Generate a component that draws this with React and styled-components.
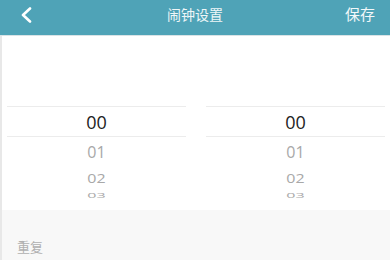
import React from "react";
import styled, { createGlobalStyle } from "styled-components";

const Global = createGlobalStyle`
  html, body { margin: 0; padding: 0; background: #fff; }
  body { font-family: "Noto Sans CJK SC", "Noto Sans", sans-serif; }
`;

const Page = styled.div`
  width: 390px;
  height: 260px;
  overflow: hidden;
  display: flex;
  flex-direction: column;
`;

const Header = styled.div`
  height: 35px;
  flex: none;
  background: #4fa3b7;
  display: grid;
  grid-template-columns: 60px 1fr 60px;
  align-items: center;
  color: #fff;
  border-bottom: 1px solid #d9e3e6;
`;

const Back = styled.div`
  padding-left: 20px;
  display: flex;
  align-items: center;
  margin-top: -6px;
`;

const Title = styled.div`
  text-align: center;
  font-size: 14px;
  color: #eef6f8;
  margin-top: -8px;
`;

const Save = styled.div`
  text-align: right;
  padding-right: 15px;
  font-size: 15px;
  color: #f2f8fa;
  margin-top: -8px;
`;

const Body = styled.div`
  flex: 1;
  display: flex;
  flex-direction: column;
  border-left: 2px solid #e8e8e8;
`;

const Pickers = styled.div`
  height: 174px;
  flex: none;
  display: flex;
  gap: 20px;
  padding: 0 5px 0 5px;
  background: #fff;
`;

const Column = styled.div`
  flex: 1;
  display: flex;
  flex-direction: column;
  padding-top: 70px;
  height: 162px;
  overflow: hidden;
  box-sizing: border-box;
`;

const Selected = styled.div`
  height: 29px;
  flex: none;
  border-top: 1px solid #ececec;
  border-bottom: 1px solid #ececec;
  display: flex;
  align-items: center;
  justify-content: center;
  font-family: "Open Sans", "Noto Sans", sans-serif;
  font-size: 18px;
  color: #222;
`;

const Item = styled.div`
  height: ${(p) => p.$h}px;
  flex: none;
  display: flex;
  align-items: center;
  justify-content: center;
  font-family: "Open Sans", "Noto Sans", sans-serif;
  font-size: 16px;
  color: #a8a8a8;
  transform: scaleY(${(p) => p.$s});
`;

const Repeat = styled.div`
  flex: 1;
  background: #f8f8f8;
  padding: 27px 0 0 15px;
  font-size: 13px;
  color: #b0b0b0;
`;

const items = [
  { t: "01", h: 30, s: 1 },
  { t: "02", h: 22, s: 0.8 },
  { t: "03", h: 12, s: 0.5 },
];

const Picker = () => (
  <Column>
    <Selected>00</Selected>
    {items.map((i) => (
      <Item key={i.t} $h={i.h} $s={i.s}>
        {i.t}
      </Item>
    ))}
  </Column>
);

export default function App() {
  return (
    <Page>
      <Global />
      <Header>
        <Back>
          <svg width="12" height="16" viewBox="0 0 12 16">
            <path d="M10 1.5 L3 8 L10 14.5" fill="none" stroke="#fff" strokeWidth="2.6" strokeLinecap="round" strokeLinejoin="round" />
          </svg>
        </Back>
        <Title>闹钟设置</Title>
        <Save>保存</Save>
      </Header>
      <Body>
        <Pickers>
          <Picker />
          <Picker />
        </Pickers>
        <Repeat>重复</Repeat>
      </Body>
    </Page>
  );
}
